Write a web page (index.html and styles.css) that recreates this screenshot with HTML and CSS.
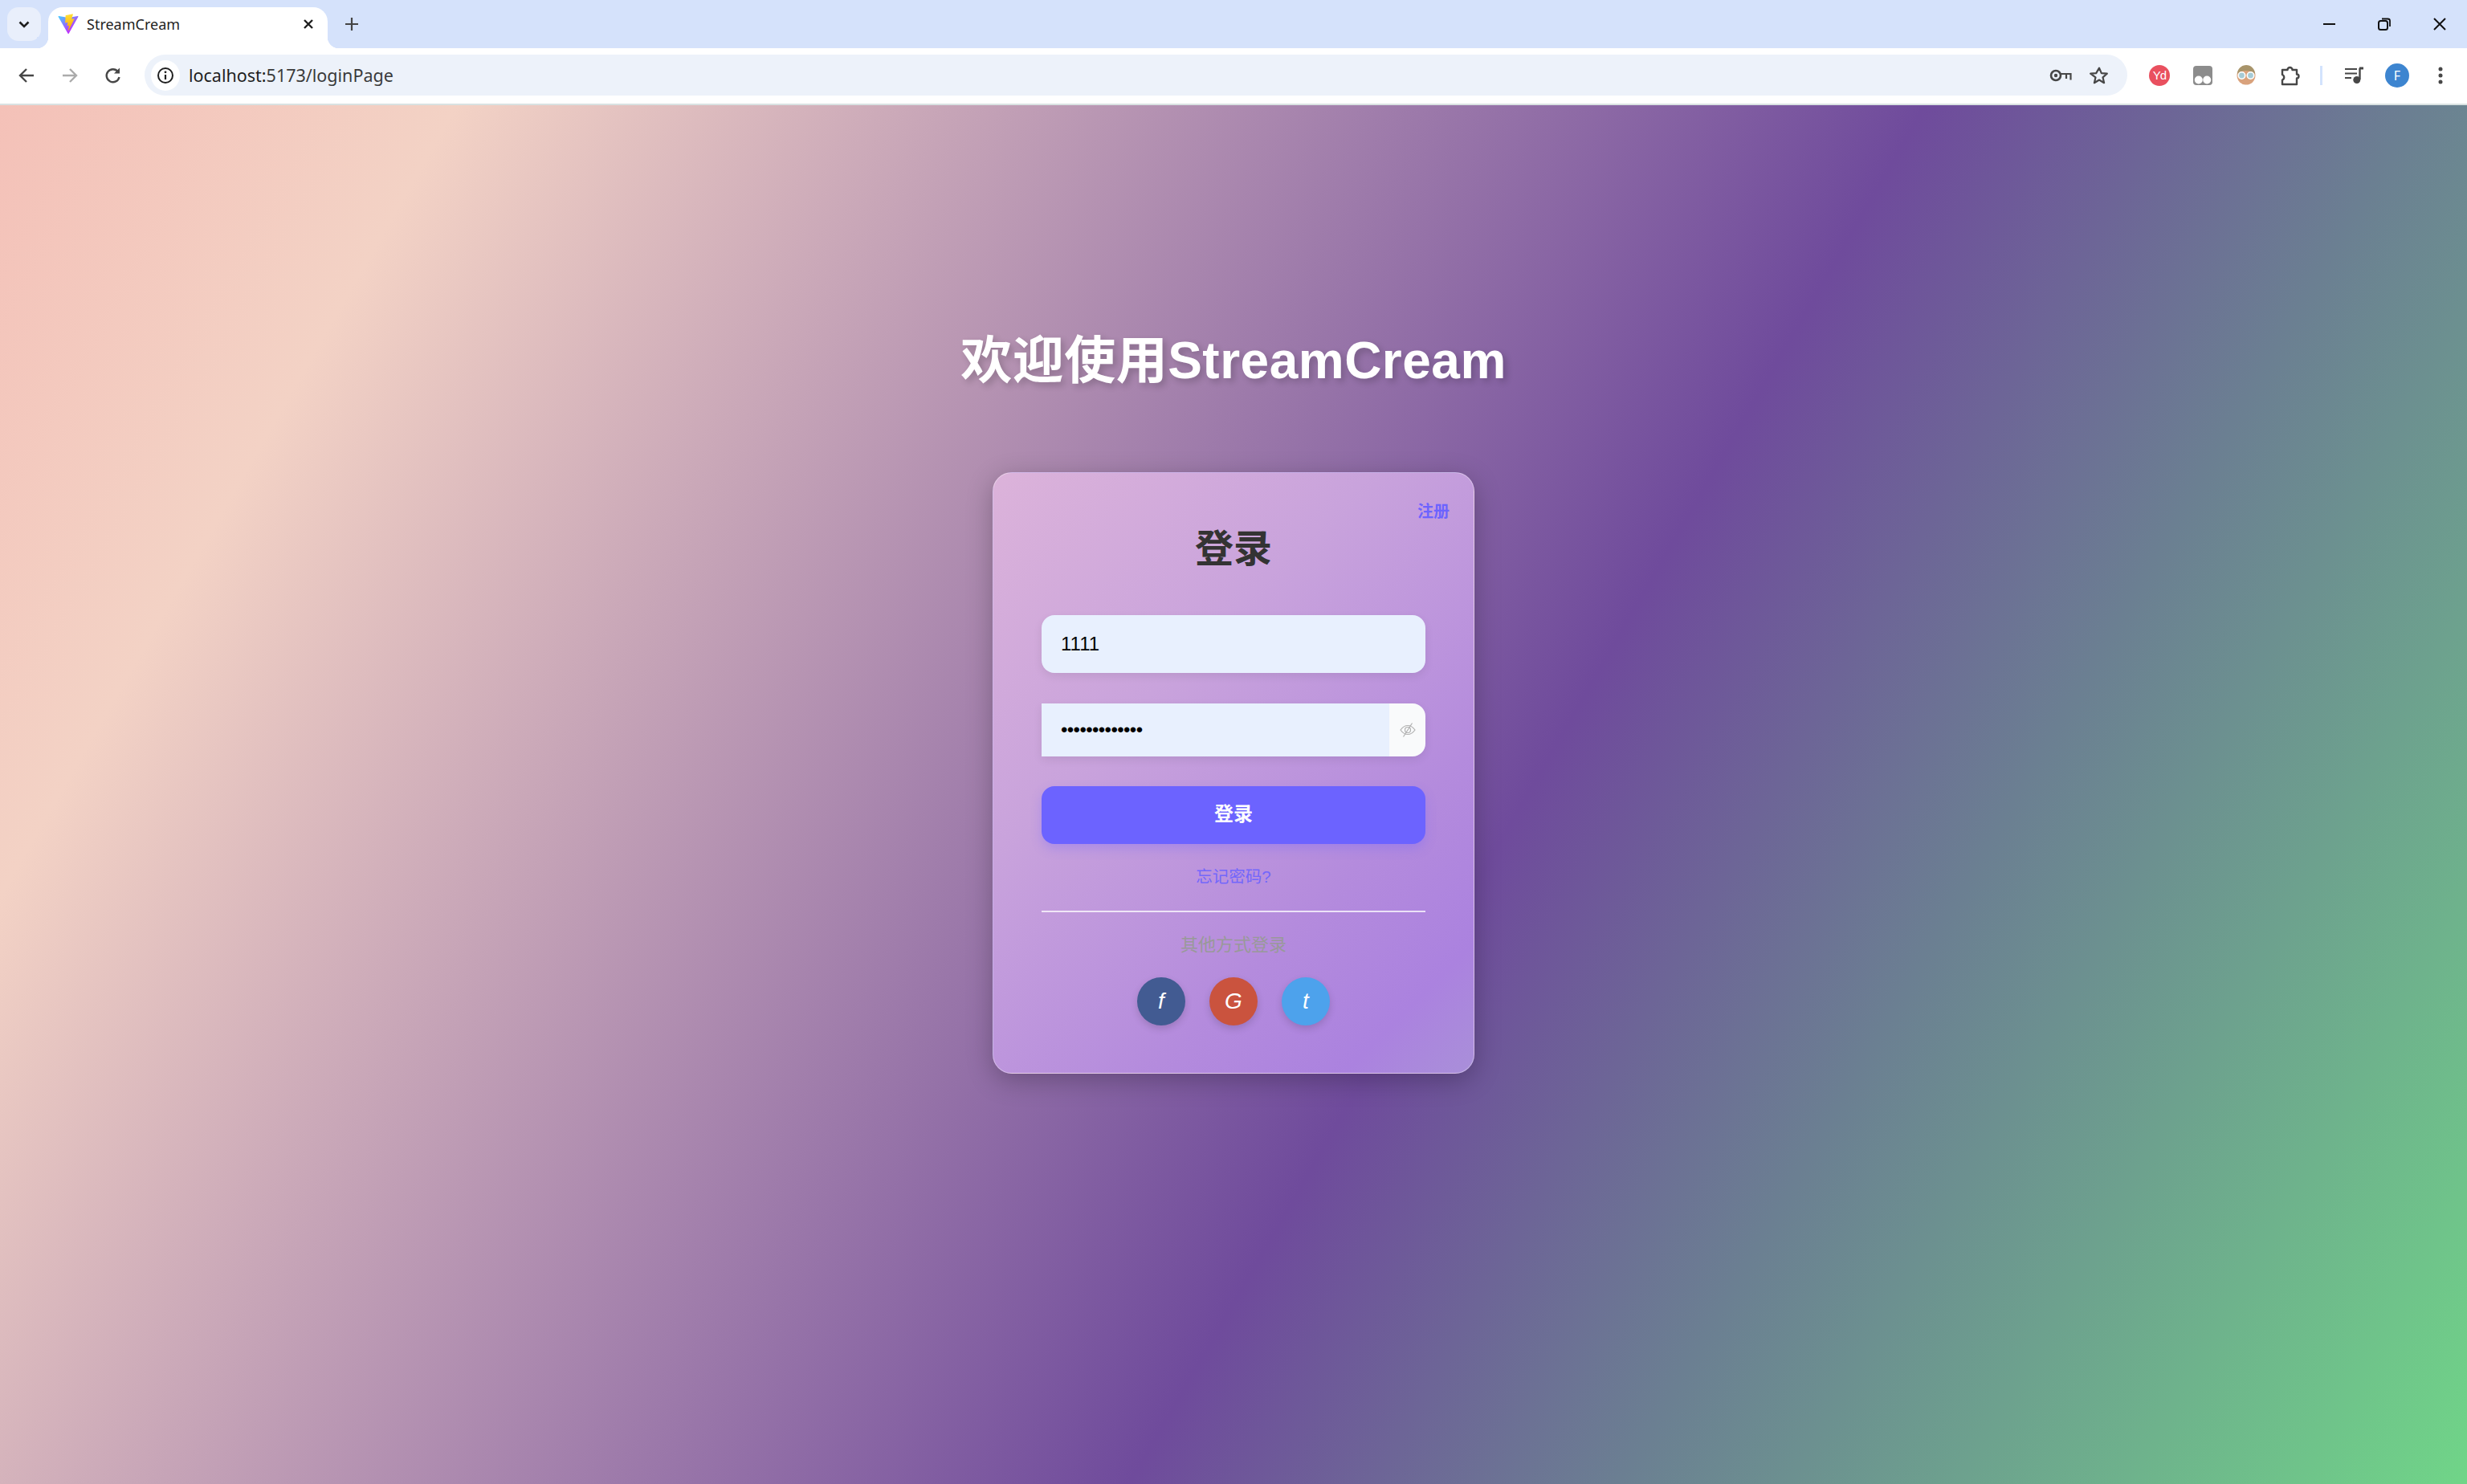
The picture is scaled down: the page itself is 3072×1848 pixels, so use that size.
FILE: index.html
```html
<!DOCTYPE html>
<html>
<head>
    <title>StreamCream</title>
    <link rel="stylesheet" href="styles.css">
</head>
<body>
    <div class="tabstrip">
        <div class="tab-search">
            <svg width="18" height="18" viewBox="0 0 18 18"><path d="M3.5 6.5 9 12l5.5-5.5" fill="none" stroke="#1f1f1f" stroke-width="2.6"/></svg>
        </div>
        <div class="tab">
            <svg class="favicon" width="26" height="26" viewBox="0 0 410 404">
                <defs>
                    <linearGradient id="viteA" x1="6" y1="33" x2="235" y2="344" gradientUnits="userSpaceOnUse">
                        <stop offset="0" stop-color="#41d1ff"/><stop offset="1" stop-color="#bd34fe"/>
                    </linearGradient>
                    <linearGradient id="viteB" x1="194" y1="8" x2="236" y2="293" gradientUnits="userSpaceOnUse">
                        <stop offset="0" stop-color="#ffea83"/><stop offset="0.08" stop-color="#ffdd35"/><stop offset="1" stop-color="#ffa800"/>
                    </linearGradient>
                </defs>
                <path fill="url(#viteA)" d="M399.641 59.5246L215.643 388.545C211.844 395.338 202.084 395.378 198.228 388.618L10.5817 59.5563C6.38087 52.1896 12.6802 43.2665 21.0281 44.7586L205.223 77.6824C206.398 77.8924 207.601 77.8904 208.776 77.6763L389.119 44.8058C397.439 43.2894 403.768 52.1434 399.641 59.5246Z"/>
                <path fill="url(#viteB)" d="M292.965 1.5744L156.801 28.2552C154.563 28.6937 152.906 30.5903 152.771 32.8664L144.395 174.33C144.198 177.662 147.258 180.248 150.51 179.498L188.42 170.749C191.967 169.931 195.172 173.055 194.443 176.622L183.18 231.775C182.422 235.487 185.907 238.661 189.532 237.56L212.947 230.446C216.577 229.344 220.065 232.527 219.297 236.242L201.398 322.875C200.278 328.294 207.486 331.249 210.492 326.603L212.5 323.5L323.454 102.072C325.312 98.3645 322.108 94.137 318.036 94.9228L279.014 102.454C275.347 103.161 272.227 99.746 273.262 96.1583L298.731 7.86689C299.767 4.27314 296.636 0.855181 292.965 1.5744Z"/>
            </svg>
            <span class="tab-title">StreamCream</span>
            <svg class="tab-close" width="14" height="14" viewBox="0 0 14 14"><path d="M2 2l10 10M12 2 2 12" stroke="#1f1f1f" stroke-width="2.4"/></svg>
        </div>
        <svg class="new-tab" width="18" height="18" viewBox="0 0 18 18"><path d="M9 1v16M1 9h16" stroke="#444" stroke-width="2.2"/></svg>
        <div class="window-controls">
            <svg width="18" height="18" viewBox="0 0 18 18"><path d="M2 9h15" stroke="#111" stroke-width="2"/></svg>
            <svg width="18" height="18" viewBox="0 0 18 18"><rect x="2" y="5" width="11" height="11" rx="2.5" fill="none" stroke="#111" stroke-width="2"/><path d="M6 2.5h7.5a2.5 2.5 0 0 1 2.500 2.500V12" fill="none" stroke="#111" stroke-width="1.800"/></svg>
            <svg width="18" height="18" viewBox="0 0 18 18"><path d="M2 2l14 14M16 2 2 16" stroke="#111" stroke-width="2"/></svg>
        </div>
    </div>

    <div class="toolbar">
        <div class="nav-buttons">
            <svg width="22" height="22" viewBox="0 0 22 22"><path d="M20 11H3M11 3l-8 8 8 8" fill="none" stroke="#474747" stroke-width="2.400"/></svg>
            <svg width="22" height="22" viewBox="0 0 22 22"><path d="M2 11h17M11 3l8 8-8 8" fill="none" stroke="#ababab" stroke-width="2.400"/></svg>
            <svg width="22" height="22" viewBox="0 0 22 22"><path d="M18.500 13a8 8 0 1 1-1.600-6.800" fill="none" stroke="#474747" stroke-width="2.400"/><path d="M19 1.500V8.500H12z" fill="#474747"/></svg>
        </div>
        <div class="omnibox">
            <div class="site-info">
                <svg width="22" height="22" viewBox="0 0 22 22"><circle cx="11" cy="11" r="9" fill="none" stroke="#1f1f1f" stroke-width="2"/><path d="M11 10v6" stroke="#1f1f1f" stroke-width="2.200"/><circle cx="11" cy="6.800" r="1.400" fill="#1f1f1f"/></svg>
            </div>
            <span class="url">localhost:<span class="url-path">5173/loginPage</span></span>
            <svg class="omni-key" width="28" height="18" viewBox="0 0 28 18"><circle cx="8" cy="9" r="6" fill="none" stroke="#474747" stroke-width="2.600"/><circle cx="8" cy="9" r="2.200" fill="#474747"/><path d="M14 7h12.500v7.500M21 8v5" fill="none" stroke="#474747" stroke-width="2.200"/></svg>
            <svg class="omni-star" width="24" height="24" viewBox="0 0 24 24"><path d="M12 2.600l2.800 6.500 7 .6-5.300 4.600 1.600 6.900-6.100-3.700-6.100 3.700 1.600-6.900L1.200 9.700l7-.6z" fill="none" stroke="#474747" stroke-width="2.200" stroke-linejoin="round"/></svg>
        </div>
        <div class="extensions">
            <span class="ext-yd">Yd</span>
            <svg width="24" height="24" viewBox="0 0 24 24"><rect width="24" height="24" rx="4" fill="#8c8c8c"/><circle cx="6.800" cy="17.500" r="5" fill="#fff"/><circle cx="17.200" cy="17.500" r="5" fill="#fff"/></svg>
            <svg width="26" height="26" viewBox="0 0 26 26"><circle cx="13" cy="13" r="11.500" fill="#d9a27c"/><path d="M2 11a11 11 0 0 1 22 0c-3-3-8-4-11-4s-8 1-11 4z" fill="#a8946a"/><circle cx="7.500" cy="13" r="4.200" fill="#a6cbd6" stroke="#fff" stroke-width="1.600"/><circle cx="18.500" cy="13" r="4.200" fill="#a6cbd6" stroke="#fff" stroke-width="1.600"/></svg>
            <svg width="26" height="26" viewBox="0 0 26 26"><path d="M3 6h6.500a3 3 0 0 1 6 0H21v5.500a2.500 2.500 0 0 1 0 5V24H3v-5.500a3.500 3.500 0 0 0 0-6.500z" fill="none" stroke="#474747" stroke-width="2.400" stroke-linejoin="round"/></svg>
            <span class="toolbar-sep"></span>
            <svg width="24" height="22" viewBox="0 0 24 22"><path d="M0 3h15M0 8.500h15M0 14h8" stroke="#474747" stroke-width="2.200"/><path d="M18 2h5" stroke="#474747" stroke-width="3"/><path d="M18.500 2v14" stroke="#474747" stroke-width="2.400"/><circle cx="14.800" cy="16.500" r="4.500" fill="#474747"/></svg>
            <span class="profile">F</span>
            <svg class="kebab" width="8" height="24" viewBox="0 0 8 24"><circle cx="4" cy="4" r="2.500" fill="#474747"/><circle cx="4" cy="12" r="2.500" fill="#474747"/><circle cx="4" cy="20" r="2.500" fill="#474747"/></svg>
        </div>
    </div>

    <main class="page">
        <h1 class="welcome">欢迎使用StreamCream</h1>
        <div class="login-card">
            <a class="register-link">注册</a>
            <h2>登录</h2>
            <form class="login-form">
                <input class="text-input" type="text" value="1111">
                <div class="password-row">
                    <input class="password-input" type="password" value="aaaaaaaaaaaaa">
                    <span class="eye-toggle">
                        <svg width="20" height="20" viewBox="0 0 20 20" fill="none" stroke="#b0b0b0" stroke-width="1.200"><path d="M1 10c2.500-3.500 5.500-5.500 9-5.500s6.500 2 9 5.500c-2.500 3.500-5.500 5.500-9 5.500S3.500 13.500 1 10z"/><circle cx="10" cy="10" r="3.500"/><path d="M15.500 1.500 4.500 18.500"/></svg>
                    </span>
                </div>
                <button class="login-button" type="button">登录</button>
            </form>
            <a class="forgot-link">忘记密码?</a>
            <div class="divider"></div>
            <p class="other-login">其他方式登录</p>
            <div class="social-row">
                <span class="social facebook">f</span>
                <span class="social google">G</span>
                <span class="social twitter">t</span>
            </div>
        </div>
    </main>
</body>
</html>
```

FILE: styles.css
```css
* {
    box-sizing: border-box;
}

html, body {
    height: 100%;
}

body {
    margin: 0;
    display: flex;
    flex-direction: column;
    overflow: hidden;
    background-color: #fff;
    font-family: "Liberation Sans", "Noto Sans CJK SC", sans-serif;
}

/* browser chrome */
.tabstrip {
    height: 60px;
    flex: none;
    display: flex;
    align-items: flex-end;
    padding-left: 9px;
    background-color: #d5e2fb;
}

.tab-search {
    width: 42px;
    height: 42px;
    margin-bottom: 9px;
    border-radius: 14px;
    display: flex;
    align-items: center;
    justify-content: center;
    background-color: #e9effb;
}

.tab {
    position: relative;
    width: 348px;
    height: 51px;
    margin-left: 9px;
    padding: 0 17px 9px 12px;
    display: flex;
    align-items: center;
    border-radius: 18px 18px 0 0;
    background-color: #fff;
}

.tab::before,
.tab::after {
    content: "";
    position: absolute;
    bottom: 0;
    width: 14px;
    height: 14px;
}

.tab::before {
    left: -14px;
    background: radial-gradient(circle at 0 0, #d5e2fb 14px, #fff 14.5px);
}

.tab::after {
    right: -14px;
    background: radial-gradient(circle at 100% 0, #d5e2fb 14px, #fff 14.5px);
}

.favicon {
    flex: none;
}

.tab-title {
    margin-left: 10px;
    flex: 1;
    font-family: "Noto Sans", sans-serif;
    font-size: 18px;
    color: #1f1f1f;
}

.new-tab {
    margin: 0 0 21px 21px;
}

.window-controls {
    margin-left: auto;
    margin-bottom: 21px;
    padding-right: 25px;
    display: flex;
    gap: 51px;
}

.toolbar {
    height: 71px;
    flex: none;
    display: flex;
    align-items: center;
    padding: 0 0 2px 22px;
    border-bottom: 2px solid #d9e2e2;
    border-radius: 16px 16px 0 0;
    background-color: #fff;
}

.nav-buttons {
    display: flex;
    gap: 32px;
    align-items: center;
}

.omnibox {
    width: 2469px;
    height: 51px;
    margin-left: 28px;
    padding: 0 23px 0 8px;
    display: flex;
    align-items: center;
    border-radius: 26px;
    background-color: #edf2fa;
}

.site-info {
    width: 36px;
    height: 38px;
    flex: none;
    display: flex;
    align-items: center;
    justify-content: center;
    border-radius: 50%;
    background-color: #fff;
}

.url {
    margin-left: 11px;
    flex: 1;
    font-family: "Noto Sans", sans-serif;
    font-size: 21.5px;
    color: #1f1f1f;
}

.url-path {
    color: #3a3a3a;
}

.omni-key {
    margin-right: 22px;
}

.extensions {
    margin-left: 27px;
    display: flex;
    align-items: center;
    gap: 29px;
}

.ext-yd {
    width: 26px;
    height: 26px;
    border-radius: 50%;
    display: flex;
    align-items: center;
    justify-content: center;
    font-size: 15px;
    letter-spacing: -1px;
    color: #fff;
    background-color: #e9505f;
}

.toolbar-sep {
    width: 3px;
    height: 24px;
    margin: 0 -1px 0 -5px;
    background-color: #d3e3fd;
}

.profile {
    width: 30px;
    height: 30px;
    margin-left: -3px;
    border-radius: 50%;
    display: flex;
    align-items: center;
    justify-content: center;
    font-family: "Noto Sans", sans-serif;
    font-size: 16px;
    color: #fff;
    background-color: #3d85d0;
}

.kebab {
    margin-left: 6px;
}

/* login page */
.page {
    flex: 1;
    display: flex;
    flex-direction: column;
    align-items: center;
    padding-top: 281px;
    background: linear-gradient(120deg, #f4c1b8 0%, #f3d2c5 14%, #6f4b9c 59%, #6b7f92 74%, #70d588 100%);
}

.welcome {
    margin: 0 0 102px;
    font-size: 64px;
    line-height: 74px;
    font-weight: bold;
    letter-spacing: 0.5px;
    color: #fff;
    text-shadow: 4px 4px 8px rgba(0, 0, 0, 0.2);
}

.login-card {
    position: relative;
    width: 600px;
    height: 749px;
    padding: 67px 60px 0;
    border: 1px solid rgba(255, 255, 255, 0.35);
    border-radius: 24px;
    background: linear-gradient(135deg, #dcb3da 0%, #c9a3dc 35%, #b48bdd 70%, #ab82df 88%, #a98fd9 100%);
    box-shadow: 0 8px 32px rgba(0, 0, 0, 0.25);
}

.register-link {
    position: absolute;
    top: 34px;
    right: 30px;
    font-size: 20px;
    line-height: 28px;
    font-weight: bold;
    color: #6c63ff;
}

h2 {
    margin: 0 0 54px;
    text-align: center;
    font-size: 48px;
    line-height: 56px;
    color: #333;
}

.login-form {
    display: flex;
    flex-direction: column;
}

.text-input,
.password-input {
    border: none;
    outline: none;
    padding: 0 0 0 24px;
    font-family: "Liberation Sans", sans-serif;
    font-size: 24px;
    color: #000;
    background-color: #e8f0fe;
}

.text-input {
    height: 72px;
    border-radius: 16px;
    box-shadow: 0 4px 12px rgba(0, 0, 0, 0.08);
}

.password-row {
    height: 66px;
    margin: 38px 0 37px;
    display: flex;
    border-radius: 0 16px 16px 0;
    overflow: hidden;
    box-shadow: 0 4px 12px rgba(0, 0, 0, 0.08);
}

.password-input {
    flex: 1;
    min-width: 0;
    letter-spacing: -0.6px;
}

.eye-toggle {
    width: 45px;
    flex: none;
    display: flex;
    align-items: center;
    justify-content: center;
    background-color: #f9fafb;
}

.login-button {
    height: 72px;
    padding: 0 0 7px;
    border: none;
    border-radius: 16px;
    font-family: inherit;
    font-size: 24px;
    font-weight: bold;
    color: #fff;
    background-color: #6c63ff;
    box-shadow: 0 6px 14px rgba(108, 99, 255, 0.3);
}

.forgot-link {
    display: block;
    margin-top: 27px;
    text-align: center;
    font-size: 20.5px;
    line-height: 28px;
    color: #6c63ff;
    opacity: 0.9;
}

.divider {
    height: 2px;
    margin-top: 28px;
    background-color: rgba(255, 255, 255, 0.75);
}

.other-login {
    margin: 27px 0 0;
    text-align: center;
    font-size: 22px;
    line-height: 28px;
    color: #999;
}

.social-row {
    margin-top: 26px;
    display: flex;
    justify-content: center;
    gap: 30px;
}

.social {
    width: 60px;
    height: 60px;
    border-radius: 50%;
    display: flex;
    align-items: center;
    justify-content: center;
    font-size: 28px;
    font-style: italic;
    color: #fff;
    box-shadow: 0 4px 10px rgba(0, 0, 0, 0.15);
}

.facebook {
    background-color: #425b92;
}

.google {
    background-color: #ca533e;
}

.twitter {
    background-color: #4da2ec;
}
```
